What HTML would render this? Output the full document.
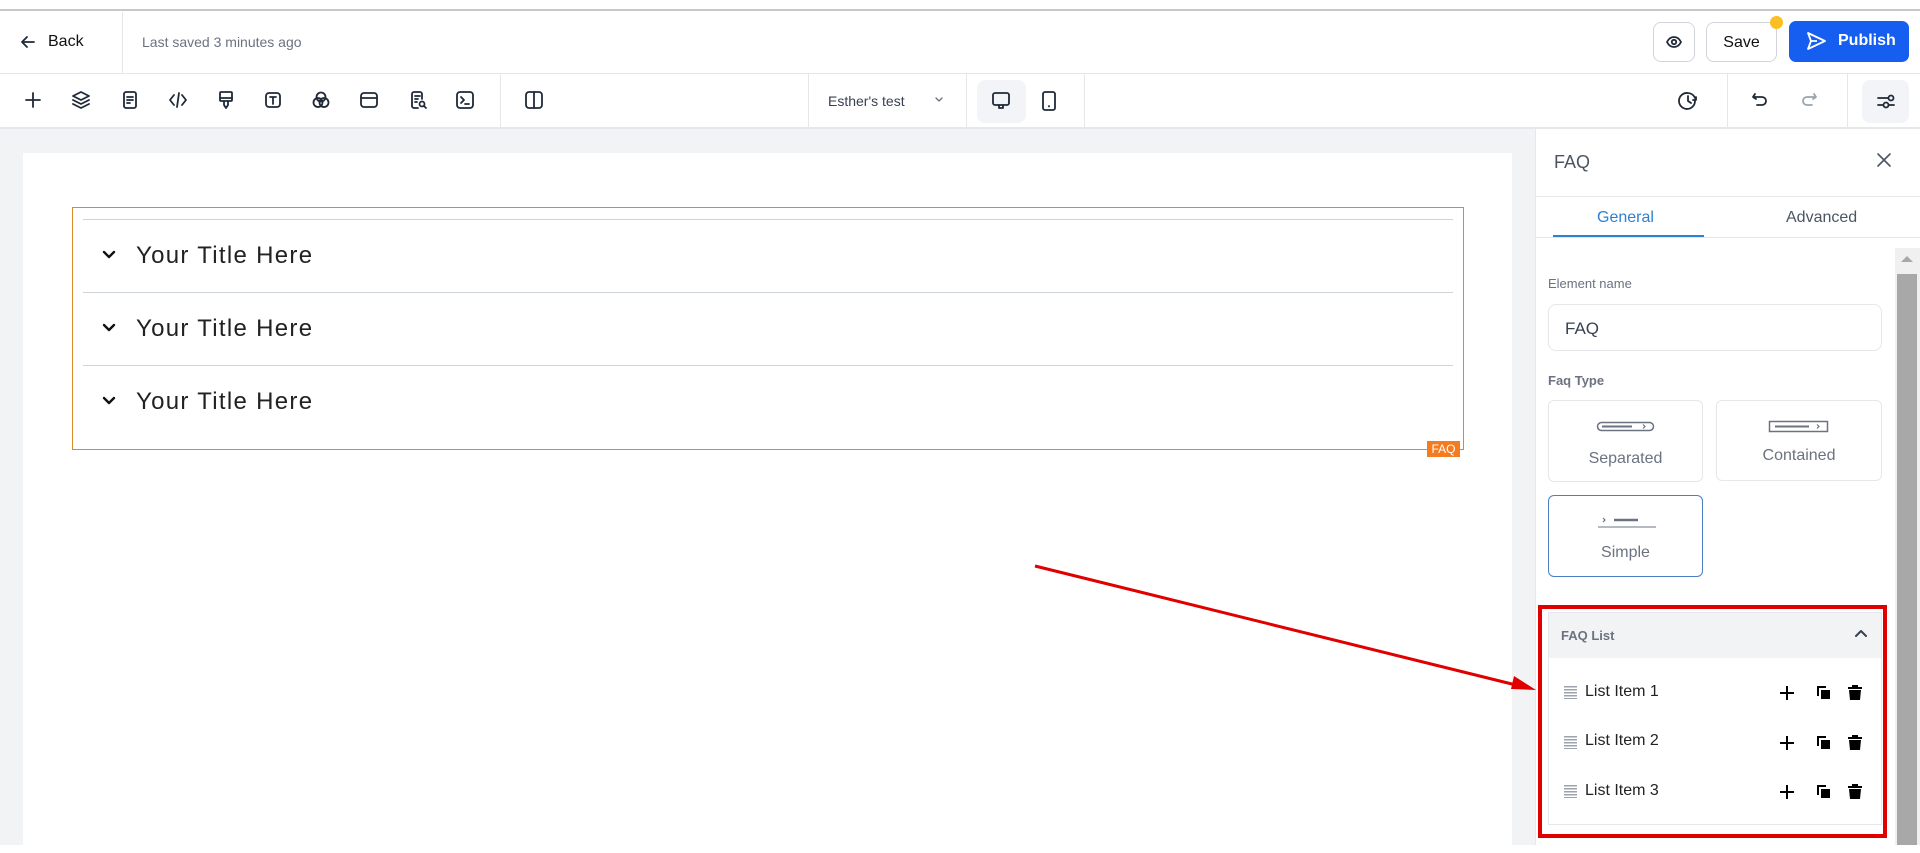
<!DOCTYPE html>
<html><head><meta charset="utf-8"><style>
*{box-sizing:border-box;margin:0;padding:0}
body{width:1920px;height:845px;overflow:hidden;background:#fff;font-family:"Liberation Sans",sans-serif;position:relative;color:#1f2937}
.a{position:absolute}
.ic{position:absolute;stroke:#1f2937;fill:none;stroke-width:1.8;stroke-linecap:round;stroke-linejoin:round}
.vd{position:absolute;width:1px;background:#e5e7eb}
</style></head><body>
<div class="a" style="left:0;top:9px;width:1920px;height:2px;background:#c8c8c8"></div>
<!-- header -->
<svg class="ic" style="left:20px;top:34px" width="16" height="16" viewBox="0 0 16 16"><path d="M14 8H2M7 3L2 8l5 5"/></svg>
<div class="a" style="left:48px;top:33px;font-size:16px;color:#111">Back</div>
<div class="vd" style="left:122px;top:12px;height:61px"></div>
<div class="a" style="left:142px;top:34px;font-size:14px;color:#6b7280">Last saved 3 minutes ago</div>
<div class="a" style="left:1653px;top:22px;width:42px;height:40px;border:1px solid #d1d5db;border-radius:8px"></div>
<svg class="ic" style="left:1665px;top:33px" width="18" height="18" viewBox="0 0 18 18"><path d="M2 9c2-4 5-5 7-5s5 1 7 5c-2 4-5 5-7 5s-5-1-7-5z"/><circle cx="9" cy="9" r="2.2"/></svg>
<div class="a" style="left:1706px;top:22px;width:71px;height:40px;border:1px solid #d1d5db;border-radius:8px;font-size:16px;line-height:40px;text-align:center;color:#111">Save</div>
<div class="a" style="left:1770px;top:16px;width:13px;height:13px;border-radius:50%;background:#fbbf24"></div>
<div class="a" style="left:1789px;top:21px;width:120px;height:41px;background:#155eef;border-radius:7px;color:#fff;font-size:16px;font-weight:bold;line-height:39px;padding-left:49px">Publish</div>
<svg class="a" style="left:1805px;top:30px" width="22" height="22" viewBox="0 0 22 22" fill="none" stroke="#fff" stroke-width="1.8" stroke-linejoin="round"><path d="M3 3l17 8-17 8 3-8z M6 11h6"/></svg>
<div class="a" style="left:0;top:73px;width:1920px;height:1px;background:#e5e7eb"></div>
<!-- toolbar -->
<svg class="ic" style="left:24px;top:91px" width="18" height="18" viewBox="0 0 18 18"><path d="M9 2v14M2 9h14"/></svg>
<svg class="ic" style="left:71px;top:90px" width="20" height="20" viewBox="0 0 20 20"><path d="M10 2l8 4-8 4-8-4z M2 10l8 4 8-4 M2 14l8 4 8-4"/></svg>
<svg class="ic" style="left:120px;top:90px" width="20" height="20" viewBox="0 0 20 20"><rect x="4" y="2" width="12" height="16" rx="2"/><path d="M7 7h6M7 10h6M7 13h3"/></svg>
<svg class="ic" style="left:168px;top:90px" width="20" height="20" viewBox="0 0 20 20"><path d="M6 5l-4 5 4 5M14 5l4 5-4 5M11 3l-2 14"/></svg>
<svg class="ic" style="left:216px;top:90px" width="20" height="20" viewBox="0 0 20 20"><rect x="4" y="2" width="12" height="9" rx="1"/><path d="M4 8h12M8 11v4l2 3 2-3v-4"/></svg>
<svg class="ic" style="left:263px;top:90px" width="20" height="20" viewBox="0 0 20 20"><rect x="3" y="3" width="14" height="14" rx="3"/><path d="M7 7h6M10 7v7"/></svg>
<svg class="ic" style="left:311px;top:90px" width="20" height="20" viewBox="0 0 20 20"><circle cx="10" cy="7" r="4.5"/><circle cx="7" cy="12.5" r="4.5"/><circle cx="13" cy="12.5" r="4.5"/></svg>
<svg class="ic" style="left:359px;top:90px" width="20" height="20" viewBox="0 0 20 20"><rect x="2" y="3" width="16" height="14" rx="3"/><path d="M2 8h16"/></svg>
<svg class="ic" style="left:408px;top:90px" width="20" height="20" viewBox="0 0 20 20"><path d="M14 9V4a2 2 0 0 0-2-2H6a2 2 0 0 0-2 2v12a2 2 0 0 0 2 2h4M7 6h5M7 9h3M7 12h2"/><circle cx="14" cy="14" r="2.5"/><path d="M16 16l2 2"/></svg>
<svg class="ic" style="left:455px;top:90px" width="20" height="20" viewBox="0 0 20 20"><rect x="2" y="2" width="16" height="16" rx="3"/><path d="M6 7l3 3-3 3M10 14h4"/></svg>
<div class="vd" style="left:500px;top:74px;height:53px"></div>
<svg class="ic" style="left:524px;top:90px" width="20" height="20" viewBox="0 0 20 20"><rect x="2" y="2" width="16" height="16" rx="3"/><path d="M10 2v16"/></svg>
<div class="vd" style="left:808px;top:74px;height:53px"></div>
<div class="a" style="left:828px;top:93px;font-size:14px;color:#374151">Esther's test</div>
<svg class="ic" style="left:934px;top:96px;stroke:#6b7280;stroke-width:1.3" width="10" height="8" viewBox="0 0 10 8"><path d="M2 2l3 3 3-3"/></svg>
<div class="vd" style="left:966px;top:74px;height:53px"></div>
<div class="a" style="left:977px;top:80px;width:49px;height:43px;background:#f2f4f7;border-radius:8px"></div>
<svg class="ic" style="left:991px;top:91px" width="20" height="20" viewBox="0 0 20 20"><rect x="2" y="2" width="16" height="12" rx="2"/><path d="M8 14v3h4v-3"/></svg>
<svg class="ic" style="left:1040px;top:90px" width="18" height="22" viewBox="0 0 18 22"><rect x="3" y="2" width="12" height="18" rx="2"/><path d="M9 16v.5"/></svg>
<div class="vd" style="left:1084px;top:74px;height:53px"></div>
<svg class="ic" style="left:1677px;top:90px" width="22" height="22" viewBox="0 0 22 22"><path d="M18 11A8 8 0 1 1 11 3a8 8 0 0 1 7 5M11 6v5l3 2M19 7v3h-3"/></svg>
<div class="vd" style="left:1727px;top:74px;height:53px"></div>
<svg class="ic" style="left:1750px;top:90px" width="20" height="20" viewBox="0 0 20 20"><path d="M5 4L3 7l3 2M3 7h9a4 4 0 0 1 0 8H7"/></svg>
<svg class="ic" style="left:1799px;top:90px;stroke:#9ca3af" width="20" height="20" viewBox="0 0 20 20"><path d="M15 4l2 3-3 2M17 7H8a4 4 0 0 0 0 8h5"/></svg>
<div class="vd" style="left:1847px;top:74px;height:53px"></div>
<div class="a" style="left:1862px;top:80px;width:47px;height:43px;background:#f2f4f7;border-radius:8px"></div>
<svg class="ic" style="left:1876px;top:91px" width="20" height="20" viewBox="0 0 20 20"><path d="M2 7h10M2 14h5"/><circle cx="15" cy="7" r="2.5"/><circle cx="10" cy="14" r="2.5"/><path d="M12.5 14H18"/></svg>
<div class="a" style="left:0;top:127px;width:1920px;height:2px;background:#e5e7eb"></div>
<!-- canvas -->
<div class="a" style="left:0;top:129px;width:1535px;height:716px;background:#f2f3f5"></div>
<div class="a" style="left:23px;top:153px;width:1489px;height:700px;background:#fff"></div>
<div class="a" style="left:72px;top:207px;width:1392px;height:243px;border:1px solid #d98a2b"></div>
<div class="a" style="left:83px;top:219px;width:1370px;height:1px;background:#cfd4d9"></div>
<div class="a" style="left:83px;top:292px;width:1370px;height:1px;background:#cfd4d9"></div>
<div class="a" style="left:83px;top:365px;width:1370px;height:1px;background:#cfd4d9"></div>
<svg class="ic" style="left:101px;top:249px;stroke:#111;stroke-width:2.4" width="16" height="12" viewBox="0 0 16 12"><path d="M3 3l5 5 5-5"/></svg>
<svg class="ic" style="left:101px;top:322px;stroke:#111;stroke-width:2.4" width="16" height="12" viewBox="0 0 16 12"><path d="M3 3l5 5 5-5"/></svg>
<svg class="ic" style="left:101px;top:395px;stroke:#111;stroke-width:2.4" width="16" height="12" viewBox="0 0 16 12"><path d="M3 3l5 5 5-5"/></svg>
<div class="a" style="left:136px;top:242px;font-size:24px;color:#222;letter-spacing:1.3px">Your Title Here</div>
<div class="a" style="left:136px;top:315px;font-size:24px;color:#222;letter-spacing:1.3px">Your Title Here</div>
<div class="a" style="left:136px;top:388px;font-size:24px;color:#222;letter-spacing:1.3px">Your Title Here</div>
<div class="a" style="left:1427px;top:441px;width:33px;height:16px;background:#f47b20;color:#fff;font-size:12px;line-height:16px;text-align:center">FAQ</div>
<!-- panel -->
<div class="a" style="left:1535px;top:129px;width:385px;height:716px;background:#fff;border-left:1px solid #e5e7eb"></div>
<div class="a" style="left:1554px;top:152px;font-size:18px;color:#4b5563">FAQ</div>
<svg class="ic" style="left:1876px;top:152px;stroke:#4b5563;stroke-width:1.6" width="16" height="16" viewBox="0 0 16 16"><path d="M2 2l12 12M14 2L2 14"/></svg>
<div class="a" style="left:1535px;top:196px;width:385px;height:1px;background:#e5e7eb"></div>
<div class="a" style="left:1597px;top:209px;font-size:16px;color:#2f80d1">General</div>
<div class="a" style="left:1786px;top:209px;font-size:16px;color:#4b5563">Advanced</div>
<div class="a" style="left:1553px;top:235px;width:151px;height:2px;background:#2f80d1"></div>
<div class="a" style="left:1535px;top:237px;width:385px;height:1px;background:#e5e7eb"></div>
<div class="a" style="left:1895px;top:248px;width:25px;height:597px;background:#f0f0f0"></div>
<div class="a" style="left:1897px;top:274px;width:20px;height:571px;background:#a8a8a8"></div>
<div class="a" style="left:1901px;top:256px;width:0;height:0;border-left:6px solid transparent;border-right:6px solid transparent;border-bottom:6px solid #a8a8a8"></div>
<div class="a" style="left:1548px;top:276px;font-size:13px;color:#6b7280">Element name</div>
<div class="a" style="left:1548px;top:304px;width:334px;height:47px;border:1px solid #e5e7eb;border-radius:8px;font-size:17px;line-height:47px;padding-left:16px;color:#374151">FAQ</div>
<div class="a" style="left:1548px;top:373px;font-size:13px;color:#6b7280;font-weight:bold">Faq Type</div>
<div class="a" style="left:1548px;top:400px;width:155px;height:82px;border:1px solid #e5e7eb;border-radius:6px"></div>
<svg class="a" style="left:1596px;top:420px" width="60" height="14" viewBox="0 0 60 14" fill="none" stroke="#6b7280"><rect x="1.5" y="2.5" width="56" height="8" rx="4" stroke-width="1.5"/><path d="M6 6.5h30" stroke-width="2"/><path d="M47 4.5l2 2-2 2" stroke-width="1.2"/></svg>
<div class="a" style="left:1548px;top:450px;width:155px;text-align:center;font-size:16px;color:#6b7280">Separated</div>
<div class="a" style="left:1716px;top:400px;width:166px;height:81px;border:1px solid #e5e7eb;border-radius:6px"></div>
<svg class="a" style="left:1768px;top:419px" width="62" height="16" viewBox="0 0 62 16" fill="none" stroke="#6b7280"><rect x="1.5" y="2.5" width="58" height="10" stroke-width="1.5"/><path d="M7 7.5h34" stroke-width="2"/><path d="M49 5.5l2 2-2 2" stroke-width="1.2"/></svg>
<div class="a" style="left:1716px;top:447px;width:166px;text-align:center;font-size:16px;color:#6b7280">Contained</div>
<div class="a" style="left:1548px;top:495px;width:155px;height:82px;border:1px solid #4a7fc4;border-radius:6px"></div>
<svg class="a" style="left:1596px;top:512px" width="62" height="18" viewBox="0 0 62 18" fill="none" stroke="#6b7280"><path d="M7 6l2 2-2 2" stroke-width="1.2"/><path d="M18 8h24" stroke-width="2.5"/><path d="M2 15h58" stroke-width="1.5" stroke="#9ca3af"/></svg>
<div class="a" style="left:1548px;top:544px;width:155px;text-align:center;font-size:16px;color:#6b7280">Simple</div>
<!-- FAQ list -->
<div class="a" style="left:1548px;top:612px;width:334px;height:213px;border:1px solid #e5e7eb"></div>
<div class="a" style="left:1549px;top:613px;width:332px;height:45px;background:#f2f3f5"></div>
<div class="a" style="left:1561px;top:628px;font-size:13px;font-weight:bold;color:#6b7280">FAQ List</div>
<svg class="ic" style="left:1854px;top:628px;stroke:#374151;stroke-width:2" width="14" height="12" viewBox="0 0 14 12"><path d="M2 8l5-5 5 5"/></svg>
<div class="a" style="left:1564px;top:686px;width:13px;height:13px;background:repeating-linear-gradient(#9ca3af 0 1.5px,transparent 1.5px 3px)"></div>
<div class="a" style="left:1564px;top:736px;width:13px;height:13px;background:repeating-linear-gradient(#9ca3af 0 1.5px,transparent 1.5px 3px)"></div>
<div class="a" style="left:1564px;top:785px;width:13px;height:13px;background:repeating-linear-gradient(#9ca3af 0 1.5px,transparent 1.5px 3px)"></div>
<div class="a" style="left:1585px;top:683px;font-size:16px;color:#222">List Item 1</div>
<div class="a" style="left:1585px;top:732px;font-size:16px;color:#222">List Item 2</div>
<div class="a" style="left:1585px;top:782px;font-size:16px;color:#222">List Item 3</div>
<svg class="a" style="left:1775px;top:681px" width="100" height="135" viewBox="0 0 100 135">
<g fill="#000" stroke="#000">
<g id="r"><path d="M12 5v14M5 12h14" stroke-width="2"/><rect x="46" y="9" width="9" height="9" stroke="none"/><path d="M43 15V6h8" fill="none" stroke-width="2"/><path d="M73 7h14M78 7V5h4v2" fill="none" stroke-width="2"/><path d="M74 9h12l-1 10h-10z" stroke="none"/></g>
<use href="#r" y="50"/><use href="#r" y="99"/>
</g></svg>
<div class="a" style="left:1538px;top:605px;width:349px;height:233px;border:4px solid #e00000"></div>
<!-- arrow -->
<svg class="a" style="left:0;top:0" width="1920" height="845"><line x1="1035" y1="566" x2="1520" y2="686" stroke="#e00000" stroke-width="3"/><path d="M1536 690l-22 -14 -3 13z" fill="#e00000"/></svg>
</body></html>
